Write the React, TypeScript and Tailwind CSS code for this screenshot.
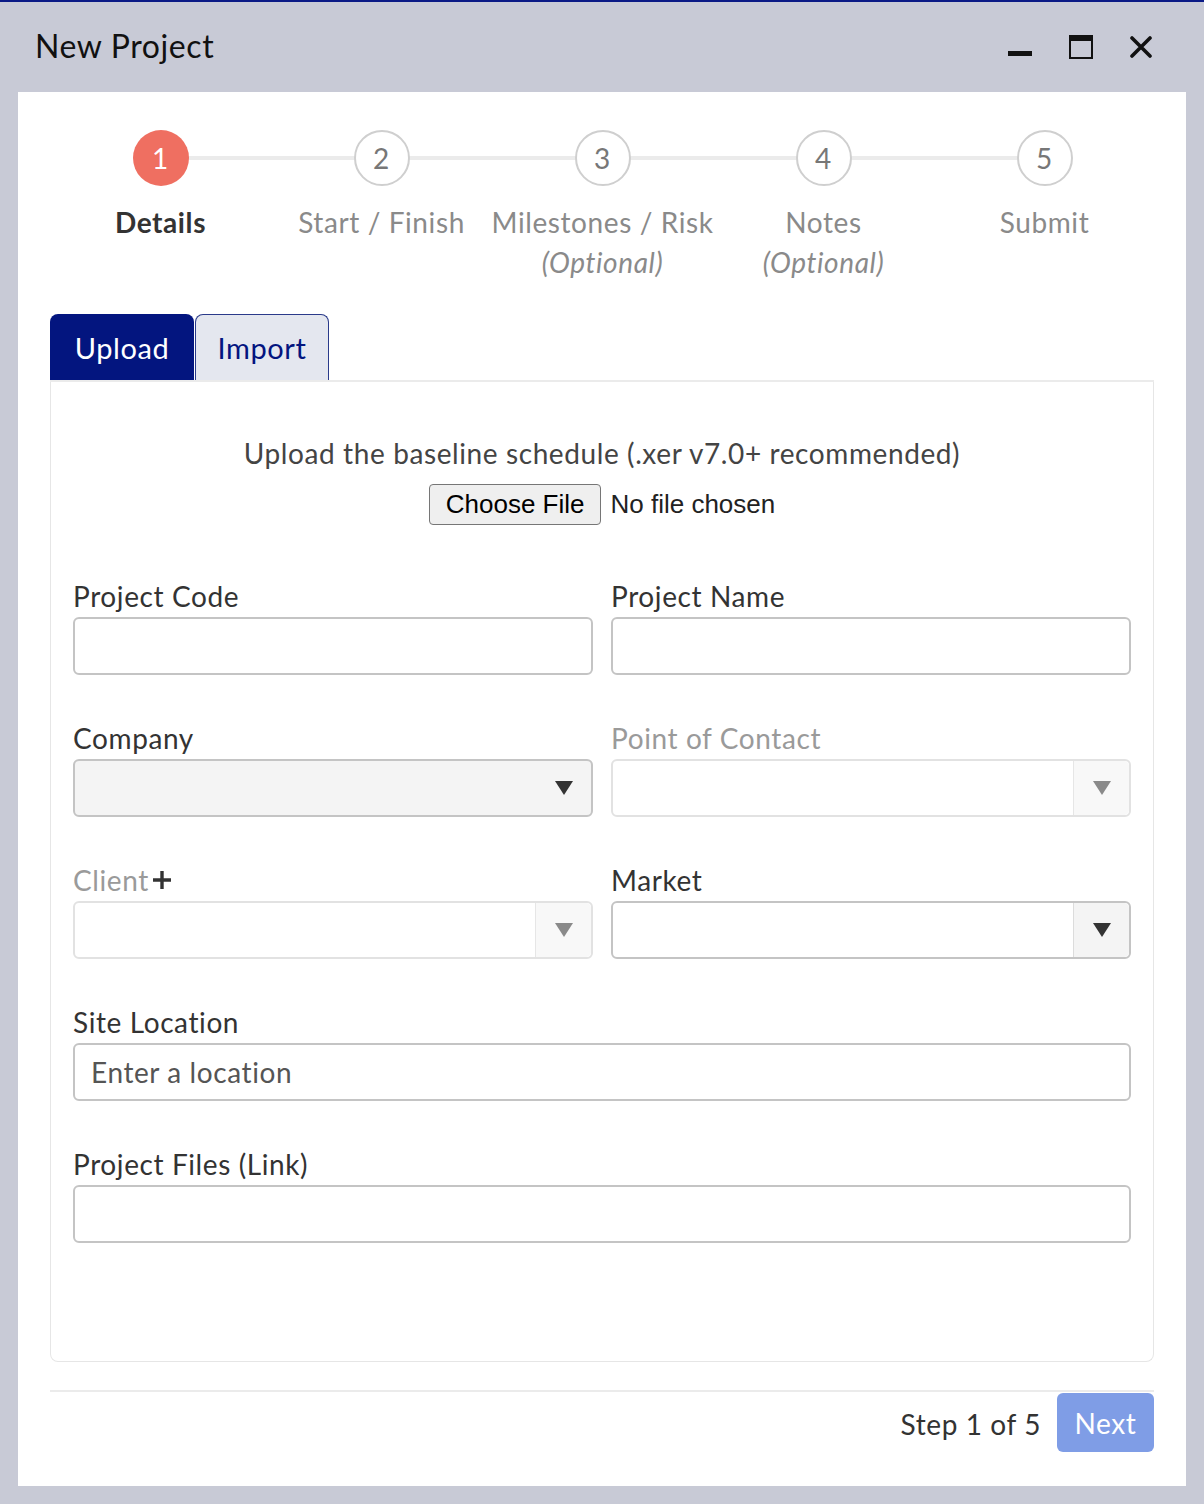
import React from "react";

const font = { fontFamily: "Lato, 'Noto Sans', sans-serif", letterSpacing: "0.6px" };

const steps = [
  { n: 1, label: "Details", optional: false },
  { n: 2, label: "Start / Finish", optional: false },
  { n: 3, label: "Milestones / Risk", optional: true },
  { n: 4, label: "Notes", optional: true },
  { n: 5, label: "Submit", optional: false },
];

function Triangle({ dark }: { dark: boolean }) {
  return (
    <svg width="18" height="14" viewBox="0 0 18 14">
      <path d="M0 0 L18 0 L9 14 Z" fill={dark ? "#333333" : "#8a8a8a"} />
    </svg>
  );
}

function Label({ children, muted }: { children: React.ReactNode; muted?: boolean }) {
  return (
    <div className={`h-[36px] mb-[3px] text-[28px] leading-[36px] ${muted ? "text-[#9a9a9a]" : "text-[#333]"}`}>
      {children}
    </div>
  );
}

function TextBox({ placeholder }: { placeholder?: string }) {
  return (
    <div className="h-[58px] rounded-[6px] border-2 border-[#c4c4c4] bg-white flex items-center px-[16px] text-[28px] text-[#555]">
      {placeholder}
    </div>
  );
}

export default function App() {
  return (
    <div className="w-[1204px] h-[1504px] bg-[#c8cad6] border-t-2 border-[#0a1a86]" style={font}>
      <div className="mx-[2px] h-[1500px] rounded-t-[10px] bg-[#c8cad6] flex flex-col">
        {/* title bar */}
        <div className="h-[90px] flex items-center pl-[33px] pr-[50px]">
          <div className="flex-1 text-[32px] text-[#111] pb-[2px]">New Project</div>
          <div className="flex items-center gap-[37px]">
            <svg width="24" height="24" viewBox="0 0 24 24">
              <rect x="0" y="16" width="24" height="5" fill="#111" />
            </svg>
            <svg width="24" height="24" viewBox="0 0 24 24">
              <rect x="1" y="1" width="22" height="22" fill="none" stroke="#111" strokeWidth="2" />
              <rect x="1" y="1" width="22" height="5" fill="#111" />
            </svg>
            <svg width="22" height="22" viewBox="0 0 22 22">
              <path d="M2 2 L20 20 M20 2 L2 20" stroke="#111" strokeWidth="3.6" strokeLinecap="round" />
            </svg>
          </div>
        </div>

        {/* body */}
        <div className="mx-[16px] h-[1394px] bg-white px-[32px] pt-[38px] flex flex-col">
          {/* stepper */}
          <div className="grid grid-cols-5 w-[1105px] h-[184px]">
            {steps.map((s, i) => (
              <div key={s.n} className="flex flex-col items-center relative">
                {i < steps.length - 1 && (
                  <div className="absolute top-[26px] left-1/2 w-full h-[4px] bg-[#ebebeb]" />
                )}
                <div
                  className={`relative w-[56px] h-[56px] rounded-full flex items-center justify-center text-[28px] ${
                    s.n === 1 ? "bg-[#ef6f61] text-white" : "bg-white border-2 border-[#cfcfcf] text-[#777]"
                  }`}
                >
                  {s.n}
                </div>
                <div
                  className={`mt-[16px] whitespace-nowrap text-[28px] leading-[40px] ${
                    s.n === 1 ? "font-bold text-[#333]" : "text-[#8a8a8a]"
                  }`}
                >
                  {s.label}
                </div>
                {s.optional && (
                  <div className="whitespace-nowrap text-[28px] leading-[40px] italic text-[#8a8a8a]">(Optional)</div>
                )}
              </div>
            ))}
          </div>

          {/* tabs */}
          <div className="flex h-[66px]">
            <div className="w-[144px] rounded-t-[8px] bg-[#03157f] text-white text-[29px] flex items-center justify-center pt-[1px]">
              Upload
            </div>
            <div className="w-[134px] ml-[1px] rounded-t-[8px] bg-[#e4e7ef] border border-b-0 border-[#2a3a8a] text-[#03157f] text-[29px] flex items-center justify-center">
              Import
            </div>
          </div>
          <div className="h-[2px] bg-[#ebebeb]" />

          {/* card */}
          <div className="h-[980px] border border-t-0 border-[#e6e6e6] rounded-b-[8px] px-[22px] pt-[53px]">
            <div className="text-center text-[28px] leading-[36px] text-[#444]">
              Upload the baseline schedule (.xer v7.0+ recommended)
            </div>
            <div
              className="mt-[13px] flex justify-center items-center gap-[9px] text-[26px] text-[#222]"
              style={{ fontFamily: "'Liberation Sans', Arial, sans-serif", letterSpacing: "0px" }}
            >
              <div className="h-[41px] px-[16px] flex items-center rounded-[4px] border border-[#767676] bg-[#efefef] text-black">
                Choose File
              </div>
              <div className="text-[#222]">No file chosen</div>
            </div>

            <div className="mt-[53px] grid grid-cols-2 gap-x-[18px] gap-y-[45px]">
              <div>
                <Label>Project Code</Label>
                <TextBox />
              </div>
              <div>
                <Label>Project Name</Label>
                <TextBox />
              </div>

              <div>
                <Label>Company</Label>
                <div className="h-[58px] rounded-[6px] border-2 border-[#c4c4c4] bg-[#f4f4f4] flex items-center justify-end pr-[18px]">
                  <Triangle dark />
                </div>
              </div>
              <div>
                <Label muted>Point of Contact</Label>
                <div className="h-[58px] rounded-[6px] border-2 border-[#e2e2e2] bg-white flex">
                  <div className="flex-1" />
                  <div className="w-[56px] border-l border-[#e6e6e6] bg-[#f8f8f8] rounded-r-[5px] flex items-center justify-center">
                    <Triangle dark={false} />
                  </div>
                </div>
              </div>

              <div>
                <Label muted>
                  <span className="inline-flex items-center">
                    Client
                    <svg className="ml-[3px]" width="20" height="20" viewBox="0 0 20 20">
                      <path d="M10 1 V19 M1 10 H19" stroke="#333" strokeWidth="3.4" />
                    </svg>
                  </span>
                </Label>
                <div className="h-[58px] rounded-[6px] border-2 border-[#e2e2e2] bg-white flex">
                  <div className="flex-1" />
                  <div className="w-[56px] border-l border-[#e6e6e6] bg-[#f8f8f8] rounded-r-[5px] flex items-center justify-center">
                    <Triangle dark={false} />
                  </div>
                </div>
              </div>
              <div>
                <Label>Market</Label>
                <div className="h-[58px] rounded-[6px] border-2 border-[#c4c4c4] bg-white flex">
                  <div className="flex-1" />
                  <div className="w-[56px] border-l border-[#dcdcdc] bg-[#f4f4f4] rounded-r-[5px] flex items-center justify-center">
                    <Triangle dark />
                  </div>
                </div>
              </div>

              <div className="col-span-2">
                <Label>Site Location</Label>
                <TextBox placeholder="Enter a location" />
              </div>
              <div className="col-span-2">
                <Label>Project Files (Link)</Label>
                <TextBox />
              </div>
            </div>
          </div>

          {/* footer */}
          <div className="mt-[28px] h-[2px] bg-[#ebebeb]" />
          <div className="flex justify-end items-center gap-[16px] pt-[1px]">
            <div className="text-[28px] text-[#333] pt-[3px]">Step 1 of 5</div>
            <div className="h-[59px] w-[97px] rounded-[6px] bg-[#7f9de6] text-white text-[28px] flex items-center justify-center">
              Next
            </div>
          </div>
        </div>
      </div>
    </div>
  );
}
